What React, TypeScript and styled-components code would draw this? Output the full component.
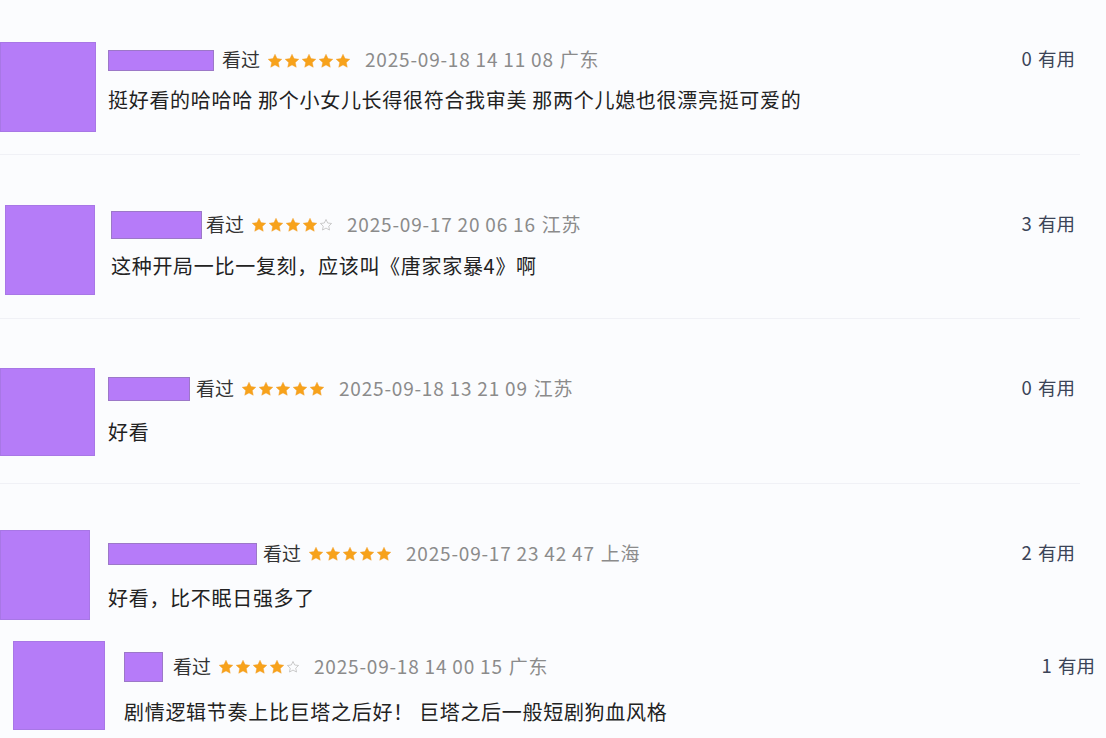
import React from "react";
import styled, { createGlobalStyle } from "styled-components";

const Global = createGlobalStyle`
  html, body { margin: 0; padding: 0; background: #fbfcfe; }
  body { font-family: "Noto Sans CJK SC", "Noto Sans", sans-serif; }
`;

type Row = {
  stars: number;
  date: string;
  region: string;
  text: string;
  useful: number;
  height: number;
  padTop: number;
  padLeft: number;
  padRight: number;
  avW: number;
  avH: number;
  gap: number;
  nameW: number;
  nameH: number;
  bodyTop: number;
  textGap: number;
  nameGap: number;
  divider: boolean;
};

const rows: Row[] = [
  { stars: 5, date: "2025-09-18 14 11 08", region: "广东", text: "挺好看的哈哈哈 那个小女儿长得很符合我审美 那两个儿媳也很漂亮挺可爱的", useful: 0,
    height: 155, padTop: 42, padLeft: 0, padRight: 31, avW: 96, avH: 90, gap: 12, nameW: 106, nameH: 21, bodyTop: 8, textGap: 15, nameGap: 8, divider: true },
  { stars: 4, date: "2025-09-17 20 06 16", region: "江苏", text: "这种开局一比一复刻，应该叫《唐家家暴4》啊", useful: 3,
    height: 164, padTop: 50, padLeft: 5, padRight: 31, avW: 90, avH: 90, gap: 16, nameW: 91, nameH: 28, bodyTop: 6, textGap: 13, nameGap: 4, divider: true },
  { stars: 5, date: "2025-09-18 13 21 09", region: "江苏", text: "好看", useful: 0,
    height: 165, padTop: 49, padLeft: 0, padRight: 31, avW: 95, avH: 88, gap: 13, nameW: 82, nameH: 24, bodyTop: 9, textGap: 17, nameGap: 6, divider: true },
  { stars: 5, date: "2025-09-17 23 42 47", region: "上海", text: "好看，比不眠日强多了", useful: 2,
    height: 146, padTop: 46, padLeft: 0, padRight: 31, avW: 90, avH: 90, gap: 18, nameW: 149, nameH: 22, bodyTop: 13, textGap: 19, nameGap: 6, divider: false },
  { stars: 4, date: "2025-09-18 14 00 15", region: "广东", text: "剧情逻辑节奏上比巨塔之后好！ 巨塔之后一般短剧狗血风格", useful: 1,
    height: 108, padTop: 11, padLeft: 13, padRight: 11, avW: 92, avH: 89, gap: 19, nameW: 39, nameH: 30, bodyTop: 11, textGap: 16, nameGap: 10, divider: false },
];

const List = styled.div`
  display: flex;
  flex-direction: column;
  width: 1106px;
  height: 738px;
  overflow: hidden;
`;

const Item = styled.div<{ $h: number; $pt: number; $pl: number; $pr: number; $div: boolean }>`
  box-sizing: border-box;
  height: ${(p) => p.$h}px;
  flex: none;
  display: flex;
  align-items: flex-start;
  padding: ${(p) => p.$pt}px ${(p) => p.$pr}px 0 ${(p) => p.$pl}px;
  position: relative;
  &::after {
    content: "";
    display: ${(p) => (p.$div ? "block" : "none")};
    position: absolute;
    left: 0;
    width: 1080px;
    bottom: 0;
    height: 1px;
    background: #f0f1f6;
  }
`;

const Avatar = styled.div<{ $w: number; $h: number }>`
  width: ${(p) => p.$w}px;
  height: ${(p) => p.$h}px;
  flex: none;
  background: #b57cf8;
  box-sizing: border-box;
  border: 1px solid #a877e6;
`;

const Body = styled.div<{ $gap: number; $top: number }>`
  flex: 1;
  display: flex;
  flex-direction: column;
  margin-left: ${(p) => p.$gap}px;
  padding-top: ${(p) => p.$top}px;
`;

const Header = styled.div<{ $h: number }>`
  display: flex;
  align-items: center;
  height: ${(p) => p.$h}px;
`;

const NameBox = styled.div<{ $w: number; $h: number }>`
  width: ${(p) => p.$w}px;
  height: ${(p) => p.$h}px;
  box-sizing: border-box;
  background: #b67bf9;
  border: 1px solid #9c78c8;
  flex: none;
`;

const Watched = styled.span<{ $gap: number }>`
  margin-left: ${(p) => p.$gap}px;
  padding-bottom: 4px;
  font-size: 19px;
  color: #333;
  line-height: 1;
  white-space: nowrap;
`;

const Stars = styled.span`
  display: inline-flex;
  align-items: center;
  gap: 1px;
  margin-left: 7px;
`;

const DateText = styled.span`
  margin-left: 14px;
  padding-bottom: 4px;
  font-size: 19px;
  color: #8b8b8b;
  line-height: 1;
  white-space: nowrap;
  letter-spacing: 0.8px;
`;

const Region = styled.span`
  margin-left: 6px;
`;

const Useful = styled.span`
  margin-left: auto;
  padding-bottom: 4px;
  font-size: 18.5px;
  color: #3b4457;
  line-height: 1;
  white-space: nowrap;
  word-spacing: 2px;
`;

const Content = styled.div<{ $gap: number }>`
  margin-top: ${(p) => p.$gap}px;
  font-size: 20px;
  line-height: 28px;
  color: #222;
  letter-spacing: 0.7px;
  white-space: pre;
`;

const Star = ({ filled }: { filled: boolean }) =>
  filled ? (
    <svg width="16" height="16" viewBox="0 0 24 24">
      <path
        d="M12 1.8l3.1 6.6 7.2.9-5.3 5 1.4 7.1L12 17.9l-6.4 3.5 1.4-7.1-5.3-5 7.2-.9z"
        fill="#f7a21b"
        stroke="#f0a030"
        strokeWidth="0.6"
      />
    </svg>
  ) : (
    <svg width="14" height="14" viewBox="0 0 24 24">
      <path
        d="M12 2.5l2.9 6.1 6.7.8-4.9 4.6 1.3 6.6L12 17.3l-6 3.3 1.3-6.6-4.9-4.6 6.7-.8z"
        fill="none"
        stroke="#c4c4c4"
        strokeWidth="1.5"
      />
    </svg>
  );

export default function App() {
  return (
    <>
      <Global />
      <List>
        {rows.map((r, i) => (
          <Item key={i} $h={r.height} $pt={r.padTop} $pl={r.padLeft} $pr={r.padRight} $div={r.divider}>
            <Avatar $w={r.avW} $h={r.avH} />
            <Body $gap={r.gap} $top={r.bodyTop}>
              <Header $h={r.nameH}>
                <NameBox $w={r.nameW} $h={r.nameH} />
                <Watched $gap={r.nameGap}>看过</Watched>
                <Stars>
                  {[0, 1, 2, 3, 4].map((k) => (
                    <Star key={k} filled={k < r.stars} />
                  ))}
                </Stars>
                <DateText>
                  {r.date}
                  <Region>{r.region}</Region>
                </DateText>
                <Useful>{r.useful} 有用</Useful>
              </Header>
              <Content $gap={r.textGap}>{r.text}</Content>
            </Body>
          </Item>
        ))}
      </List>
    </>
  );
}
